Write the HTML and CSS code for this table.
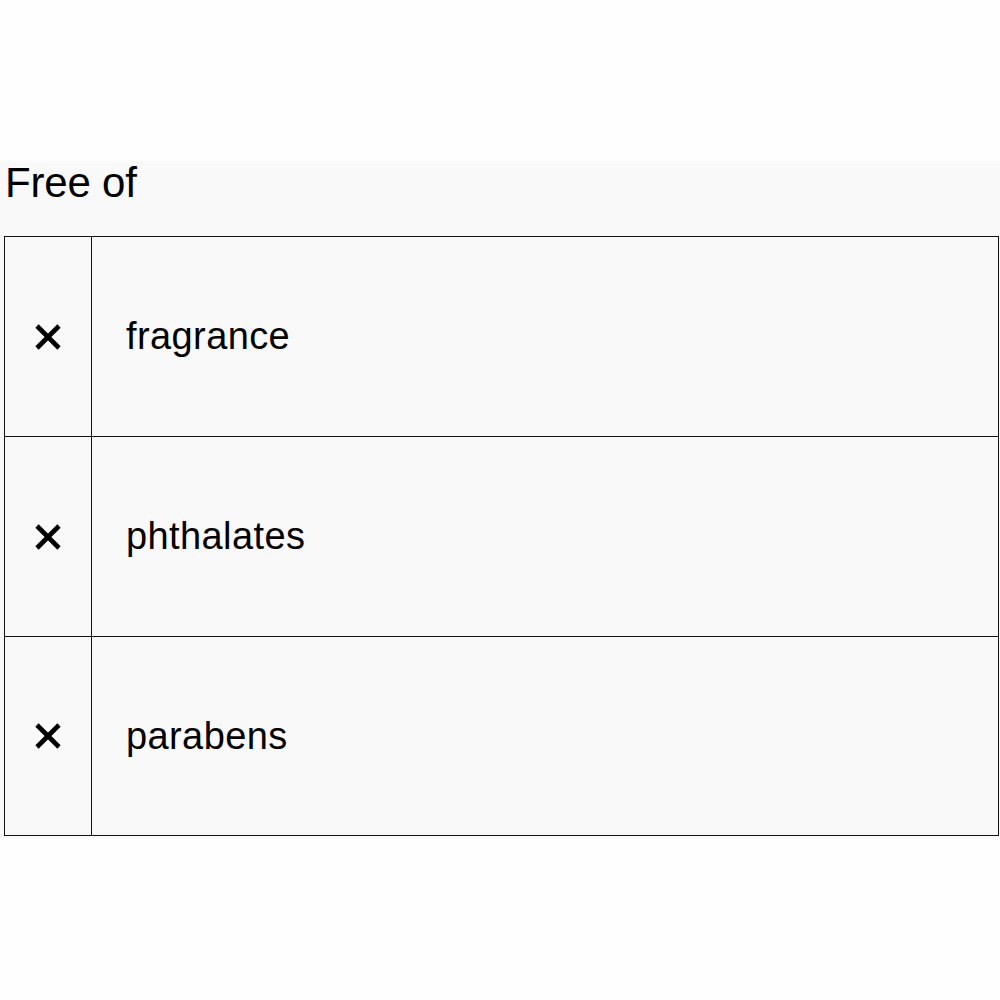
FILE: index.html
```html
<!DOCTYPE html>
<html>
<head>
<meta charset="utf-8">
<link rel="stylesheet" href="styles.css">
</head>
<body>
<section class="panel">
  <h2 class="title">Free of</h2>
  <table class="list">
    <tr>
      <td class="mark"><svg class="x" viewBox="0 0 26 26"><path d="M2 2L24 24M24 2L2 24"/></svg></td>
      <td class="name">fragrance</td>
    </tr>
    <tr>
      <td class="mark"><svg class="x" viewBox="0 0 26 26"><path d="M2 2L24 24M24 2L2 24"/></svg></td>
      <td class="name">phthalates</td>
    </tr>
    <tr>
      <td class="mark"><svg class="x" viewBox="0 0 26 26"><path d="M2 2L24 24M24 2L2 24"/></svg></td>
      <td class="name">parabens</td>
    </tr>
  </table>
</section>
</body>
</html>
```

FILE: styles.css
```css
html, body {
  margin: 0;
  padding: 0;
  background: #fefefe;
}
body {
  font-family: "Liberation Sans", Arial, sans-serif;
  color: #000;
}
.panel {
  margin-top: 161px;
  background: #f9f9f9;
  padding: 0 2px 2px 4px;
}
.title {
  margin: 0 0 31px 1px;
  font-size: 42px;
  font-weight: 400;
  line-height: 44px;
  letter-spacing: -0.2px;
}
.list {
  width: 995px;
  border-collapse: collapse;
}
.list td {
  border: 1px solid #111;
  height: 199px;
  padding: 0;
  vertical-align: middle;
}
.list tr:last-child td {
  height: 198px;
}
.mark {
  width: 86px;
  text-align: center;
}
.x {
  display: block;
  width: 26px;
  height: 26px;
  margin: 0 auto;
  fill: none;
  stroke: #000;
  stroke-width: 4.6;
}
.name {
  padding-left: 34px !important;
  font-size: 38px;
  letter-spacing: 0.4px;
}
```
